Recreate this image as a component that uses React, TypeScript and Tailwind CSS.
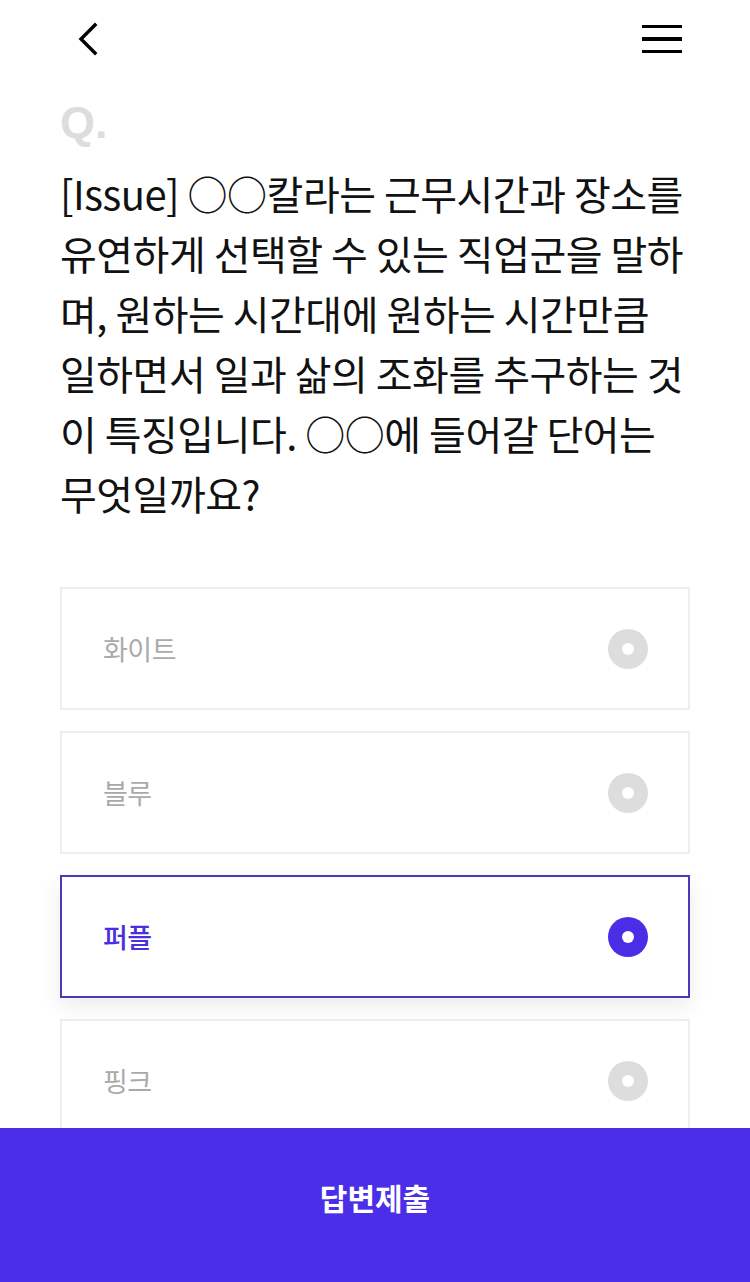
import { useState } from "react";

const KR = "font-['Noto_Sans_CJK_KR','Noto_Sans',sans-serif]";

const options = ["화이트", "블루", "퍼플", "핑크"];

const questionLines = [
  "[Issue] ○○칼라는 근무시간과 장소를",
  "유연하게 선택할 수 있는 직업군을 말하",
  "며, 원하는 시간대에 원하는 시간만큼",
  "일하면서 일과 삶의 조화를 추구하는 것",
  "이 특징입니다. ○○에 들어갈 단어는",
  "무엇일까요?",
];

export default function App() {
  const [selected, setSelected] = useState(2);

  return (
    <div className={`min-h-screen bg-white ${KR}`}>
      {/* Header */}
      <header className="flex h-[78px] items-center justify-between pl-[74px] pr-[68px]">
        <button className="flex h-10 w-8 items-center">
          <svg width="26" height="34" viewBox="0 0 26 34" fill="none">
            <path d="M21 3L7 17l14 14" stroke="#000" strokeWidth="3.4" strokeLinecap="square" />
          </svg>
        </button>
        <button className="flex w-10 flex-col gap-[9px]">
          <span className="block h-[3.5px] w-10 bg-black" />
          <span className="block h-[3.5px] w-10 bg-black" />
          <span className="block h-[3.5px] w-10 bg-black" />
        </button>
      </header>

      <main className="px-[60px] pb-[200px]">
        <div className="mt-[21px] font-['Liberation_Sans',sans-serif] text-[45px] font-bold leading-[48px] text-[#dddddd]">
          Q.
        </div>

        <p className="mt-[16px] text-[40px] leading-[60px] tracking-[-0.5px] text-[#111111]">
          {questionLines.map((line, i) => (
            <span key={i} className="block whitespace-nowrap">
              {line}
            </span>
          ))}
        </p>

        <ul className="mt-[64px] flex flex-col gap-[21px]">
          {options.map((label, i) => {
            const active = i === selected;
            return (
              <li key={label}>
                <button
                  onClick={() => setSelected(i)}
                  className={`flex h-[123px] w-full items-center justify-between bg-white pl-[41px] pr-[40px] text-left ${
                    active
                      ? "border-2 border-[#5036b8] shadow-[0_8px_20px_rgba(0,0,0,0.08)]"
                      : "border-2 border-[#eeeeee]"
                  }`}
                >
                  <span
                    className={`text-[27px] leading-none tracking-[-0.5px] ${
                      active ? "font-medium text-[#4a2ee0]" : "text-[#aaaaaa]"
                    }`}
                  >
                    {label}
                  </span>
                  <span
                    className={`flex h-10 w-10 items-center justify-center rounded-full ${
                      active ? "bg-[#4a2ee6]" : "bg-[#dddddd]"
                    }`}
                  >
                    <span className="h-3 w-3 rounded-full bg-white" />
                  </span>
                </button>
              </li>
            );
          })}
        </ul>
      </main>

      {/* Submit bar */}
      <div className="fixed inset-x-0 bottom-0 flex h-[154px] items-center justify-center bg-[#4a2ee8]">
        <span className="mb-[16px] text-[30px] font-bold text-white">답변제출</span>
      </div>
    </div>
  );
}
